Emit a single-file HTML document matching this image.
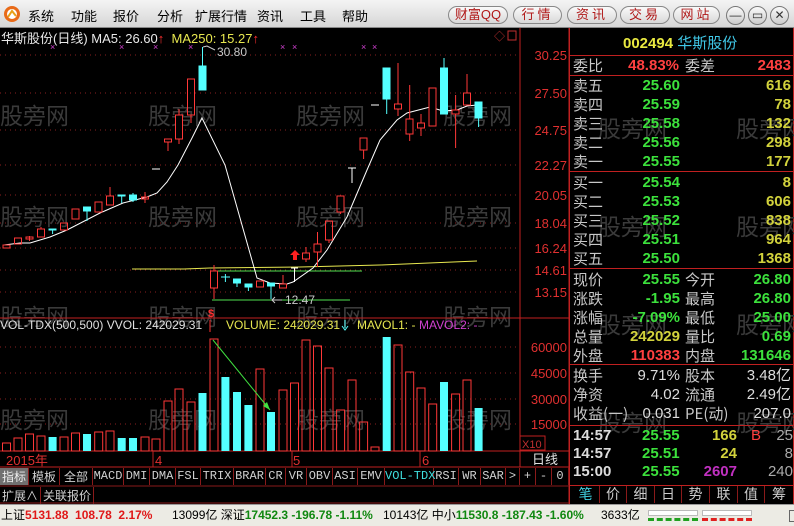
<!DOCTYPE html>
<html><head><meta charset="utf-8"><style>
*{margin:0;padding:0;box-sizing:border-box}
body{width:794px;height:526px;overflow:hidden;background:#000;font-family:"Liberation Sans","Noto Sans CJK SC",sans-serif;position:relative}
.a{position:absolute;white-space:nowrap}
#tb{left:0;top:0;width:794px;height:28px;background:linear-gradient(#f4f4f4,#d6d6d6);border-bottom:1px solid #888}
.m{top:6px;font-size:13px;color:#000}
.btn{top:6px;height:18px;border:1px solid #888;border-radius:9px;background:linear-gradient(#fafafa,#d8d8d8);color:#b01818;font-size:13px;text-align:center;line-height:16px;letter-spacing:3px}
.ci{top:6px;width:19px;height:19px;border:1px solid #777;border-radius:50%;background:linear-gradient(#fafafa,#ccc);font-size:12px;text-align:center;line-height:17px;color:#333}
.rp{font-size:15px;line-height:19px}
.l{color:#c8c8c8;font-family:"Noto Sans CJK SC",sans-serif}
.g{color:#3ce13c;font-weight:bold}
.y{color:#d2d23c;font-weight:bold}
.r{color:#ff4040;font-weight:bold}
.ib{top:468px;height:17px;border-right:1px solid #8a1a1a;color:#d0d0d0;font-size:12px;line-height:17px;text-align:center;font-family:"Liberation Mono","Noto Sans CJK SC",monospace}
.wm{color:#3a3a3a;font-size:23px;font-family:"Noto Sans CJK SC",sans-serif}
</style></head><body>
<div class="a" id="tb"></div>
<svg class="a" style="left:3px;top:5px" width="18" height="18"><circle cx="9" cy="9" r="8" fill="#e86a18"/><circle cx="9" cy="9" r="5" fill="#fff"/><path d="M5 12 L9 6 L13 11" stroke="#e8a018" stroke-width="2" fill="none"/></svg>
<div class="a m" style="left:28px">系统</div><div class="a m" style="left:71px">功能</div><div class="a m" style="left:113px">报价</div><div class="a m" style="left:157px">分析</div><div class="a m" style="left:195px">扩展行情</div><div class="a m" style="left:257px">资讯</div><div class="a m" style="left:300px">工具</div><div class="a m" style="left:342px">帮助</div>
<div class="a btn" style="left:448px;width:60px;letter-spacing:0">财富QQ</div><div class="a btn" style="left:513px;width:49px">行情</div><div class="a btn" style="left:567px;width:50px">资讯</div><div class="a btn" style="left:620px;width:50px">交易</div><div class="a btn" style="left:673px;width:47px">网站</div>
<div class="a ci" style="left:726px">—</div><div class="a ci" style="left:748px">▭</div><div class="a ci" style="left:770px">✕</div>

<svg class="a" style="left:0;top:28px" width="570" height="477" viewBox="0 28 570 477">
<g stroke="#8a2020" stroke-dasharray="1 4">
<line x1="0" y1="55" x2="520" y2="55"/><line x1="0" y1="93" x2="520" y2="93"/><line x1="0" y1="130" x2="520" y2="130"/><line x1="0" y1="165" x2="520" y2="165"/><line x1="0" y1="195" x2="520" y2="195"/><line x1="0" y1="223" x2="520" y2="223"/><line x1="0" y1="248" x2="520" y2="248"/><line x1="0" y1="270" x2="520" y2="270"/><line x1="0" y1="292" x2="520" y2="292"/>
<line x1="0" y1="347" x2="520" y2="347"/><line x1="0" y1="373" x2="520" y2="373"/><line x1="0" y1="399" x2="520" y2="399"/><line x1="0" y1="424" x2="520" y2="424"/>
</g>
<g class="wm" fill="#3a3a3a" font-size="23" font-family="Noto Sans CJK SC,sans-serif">
<text x="0" y="124">股旁网</text><text x="148" y="124">股旁网</text><text x="296" y="124">股旁网</text><text x="443" y="124">股旁网</text>
<text x="0" y="225">股旁网</text><text x="148" y="225">股旁网</text><text x="296" y="225">股旁网</text><text x="443" y="225">股旁网</text>
<text x="0" y="325">股旁网</text><text x="148" y="325">股旁网</text><text x="296" y="325">股旁网</text><text x="443" y="325">股旁网</text>
<text x="0" y="428">股旁网</text><text x="148" y="428">股旁网</text><text x="296" y="428">股旁网</text><text x="443" y="428">股旁网</text>
</g>
<g stroke="#c02020" fill="none"><line x1="520" y1="28" x2="520" y2="467"/><line x1="0" y1="318" x2="570" y2="318"/><line x1="0" y1="451" x2="570" y2="451"/><line x1="0" y1="467" x2="570" y2="467"/><line x1="569" y1="28" x2="569" y2="505"/>
<rect x="520" y="436" width="25" height="14"/></g>
<g fill="#e03030" font-size="13" font-family="Liberation Sans" text-anchor="end">
<text x="567" y="60">30.25</text><text x="567" y="98">27.50</text><text x="567" y="135">24.75</text><text x="567" y="170">22.27</text><text x="567" y="200">20.05</text><text x="567" y="228">18.04</text><text x="567" y="253">16.24</text><text x="567" y="275">14.61</text><text x="567" y="297">13.15</text>
<text x="567" y="352">60000</text><text x="567" y="378">45000</text><text x="567" y="404">30000</text><text x="567" y="429">15000</text>
</g>
<text x="522" y="448" fill="#c03030" font-size="11">X10</text>
<g fill="#d040d0" font-size="9"><text x="50" y="50">×</text><text x="119" y="50">×</text><text x="153" y="50">×</text><text x="188" y="50">×</text><text x="280" y="50">×</text><text x="292" y="50">×</text><text x="361" y="50">×</text><text x="372" y="50">×</text></g>
<text x="494" y="40" fill="#c03030" font-size="11">◇</text><rect x="508" y="31" width="8" height="9" fill="none" stroke="#c03030"/>
<polyline points="132,269 184,269 210,268 300,267 380,265 477,261" stroke="#e8e850" fill="none"/>
<line x1="213" y1="271" x2="362" y2="271" stroke="#50e050"/><line x1="212" y1="300" x2="350" y2="300" stroke="#50e050"/>
<polyline points="4,245 20,243 30,243 50,237 67,230 100,213 123,203 147,197 157,193 167,182 178,165 192,138 202,118 225,165 257,278 270,283 287,284 293,282 313,268 327,250 347,217 367,170 380,140 397,120 407,113 430,107 443,111 457,110 467,106 477,105" stroke="#fff" fill="none"/>
<g stroke="#ff3838" fill="none">
<rect x="3" y="245" width="7" height="3"/><rect x="14.5" y="238" width="7" height="6"/><line x1="29.5" y1="236" x2="29.5" y2="241"/><rect x="26" y="237" width="7" height="2"/>
<line x1="41" y1="227" x2="41" y2="229"/><rect x="37.5" y="229" width="7" height="8"/><rect x="60.5" y="223" width="7" height="7"/><rect x="72" y="209" width="7" height="10"/><rect x="95" y="202" width="7" height="10"/><line x1="110" y1="187" x2="110" y2="196"/><rect x="106.5" y="196" width="7" height="9"/>
<line x1="145" y1="192" x2="145" y2="203"/><rect x="141.5" y="197" width="7" height="2"/>
<line x1="168" y1="142" x2="168" y2="151"/><rect x="164.5" y="139" width="7" height="3"/><line x1="179" y1="109" x2="179" y2="144"/><rect x="175.5" y="115" width="7" height="24" fill="#000"/><line x1="191" y1="115" x2="191" y2="123"/><rect x="187.5" y="79" width="7" height="36"/>
<line x1="214" y1="265" x2="214" y2="299"/><rect x="210.5" y="271" width="7" height="17" fill="#000"/><rect x="256.5" y="281" width="7" height="6"/><line x1="283" y1="275" x2="283" y2="288"/><rect x="279.5" y="284" width="7" height="4" fill="#000"/>
<line x1="306" y1="247" x2="306" y2="262"/><rect x="302.5" y="253" width="7" height="6" fill="#000"/><line x1="317.5" y1="232" x2="317.5" y2="267"/><rect x="314" y="244" width="7" height="8" fill="#000"/><line x1="329" y1="240" x2="329" y2="243"/><rect x="325.5" y="221" width="7" height="19"/><line x1="340.6" y1="212" x2="340.6" y2="214"/><rect x="337" y="196" width="7" height="16"/>
<line x1="363.6" y1="150" x2="363.6" y2="159"/><rect x="360" y="138" width="7" height="12"/>
<line x1="398" y1="63" x2="398" y2="116"/><rect x="394.5" y="104" width="7" height="5" fill="#000"/><line x1="409.7" y1="85" x2="409.7" y2="141"/><rect x="406" y="119" width="7" height="15" fill="#000"/><line x1="421" y1="114" x2="421" y2="136"/><rect x="417.5" y="123" width="7" height="5" fill="#000"/><rect x="429" y="88" width="7" height="38" fill="#000"/>
<line x1="455.6" y1="95" x2="455.6" y2="148"/><rect x="452" y="110" width="7" height="4" fill="#000"/><line x1="467" y1="74" x2="467" y2="93"/><rect x="463.5" y="93" width="7" height="12"/>
</g>
<g stroke="#54ffff" fill="#54ffff">
<line x1="52.6" y1="229" x2="52.6" y2="234"/><rect x="49" y="229" width="7" height="1"/><line x1="87" y1="211" x2="87" y2="221"/><rect x="83.5" y="207" width="7" height="4"/><line x1="121.7" y1="195" x2="121.7" y2="203"/><rect x="118" y="195" width="7" height="1"/><line x1="133" y1="193" x2="133" y2="202"/><rect x="129.5" y="195" width="7" height="5"/>
<line x1="202.5" y1="47" x2="202.5" y2="66"/><rect x="199" y="66" width="7" height="24"/>
<line x1="225.4" y1="274" x2="225.4" y2="282"/><line x1="221" y1="277" x2="230" y2="277"/><line x1="237" y1="283" x2="237" y2="287"/><rect x="233.5" y="279" width="7" height="4"/><line x1="248.4" y1="287" x2="248.4" y2="291"/><rect x="245" y="284" width="7" height="3"/><line x1="271" y1="286" x2="271" y2="299"/><rect x="267.5" y="283" width="7" height="3"/>
<line x1="386.7" y1="99" x2="386.7" y2="114"/><rect x="383" y="68" width="7" height="31"/><line x1="444" y1="58" x2="444" y2="68"/><rect x="440.5" y="68" width="7" height="46"/><line x1="478.6" y1="118" x2="478.6" y2="127"/><rect x="475" y="102" width="7" height="16"/>
</g>
<g stroke="#fff"><line x1="152" y1="169" x2="160" y2="169"/><line x1="291" y1="268" x2="298" y2="268"/><line x1="294.5" y1="268" x2="294.5" y2="282"/><line x1="348" y1="168" x2="356" y2="168"/><line x1="352" y1="168" x2="352" y2="183"/><line x1="371" y1="105" x2="379" y2="105"/></g>
<path d="M203 47 L207 46 L215 50" stroke="#ccc" fill="none"/><text x="217" y="56" fill="#c8c8c8" font-size="12">30.80</text>
<path d="M272 300 L282 300 M275 297 L272 300 L275 303" stroke="#ccc" fill="none"/><text x="285" y="304" fill="#c8c8c8" font-size="12">12.47</text>
<path d="M295 250 L300 255 L297 255 L297 260 L293 260 L293 255 L290 255 Z" fill="#ff2020"/>
<text x="208" y="317" fill="#ff3030" font-size="11" font-weight="bold">$</text>
<g id="vol">
<g stroke="#ff3838" fill="none">
<rect x="2.5" y="443" width="8" height="8"/><rect x="14" y="438" width="8" height="13"/><rect x="25.5" y="434" width="8" height="17"/><rect x="37" y="436" width="8" height="15"/><rect x="60" y="437" width="8" height="14"/><rect x="71.5" y="433" width="8" height="18"/><rect x="94.7" y="432" width="8" height="19"/><rect x="106" y="431" width="8" height="20"/><rect x="141" y="437" width="8" height="14"/><rect x="152" y="439" width="8" height="12"/>
<rect x="164" y="401" width="8" height="50"/><rect x="175" y="389" width="8" height="62"/><rect x="187" y="402" width="8" height="49"/><rect x="210" y="339" width="8" height="112"/><rect x="256" y="369" width="8" height="82"/><rect x="279" y="390" width="8" height="61"/><rect x="290.5" y="383" width="8" height="68"/><rect x="302" y="340" width="8" height="111"/><rect x="313.5" y="346" width="8" height="105"/><rect x="325" y="368" width="8" height="83"/><rect x="336.6" y="410" width="8" height="41"/><rect x="348" y="380" width="8" height="71"/><rect x="359.6" y="422" width="8" height="29"/><rect x="371" y="447" width="8" height="4"/>
<rect x="394" y="345" width="8" height="106"/><rect x="405.7" y="372" width="8" height="79"/><rect x="417" y="388" width="8" height="63"/><rect x="428.7" y="404" width="8" height="47"/><rect x="451.6" y="394" width="8" height="57"/><rect x="463" y="380" width="8" height="71"/>
</g>
<g fill="#54ffff">
<rect x="48.6" y="437" width="8" height="14"/><rect x="83" y="434" width="8" height="17"/><rect x="117.7" y="438" width="8" height="13"/><rect x="129" y="438" width="8" height="13"/><rect x="198.5" y="393" width="8" height="58"/><rect x="221.4" y="377" width="8" height="74"/><rect x="233" y="392" width="8" height="59"/><rect x="244.4" y="405" width="8" height="46"/><rect x="267" y="412" width="8" height="39"/><rect x="382.7" y="337" width="8" height="114"/><rect x="440" y="382" width="8" height="69"/><rect x="474.6" y="408" width="8" height="43"/>
</g></g>
<line x1="213" y1="340" x2="270" y2="410" stroke="#40e040"/><path d="M270 410 L263 406 L267 402 Z" fill="#40e040"/>
<g font-size="12" font-family="Liberation Sans"><text x="0" y="329" fill="#e0e0e0">VOL-TDX(500,500)  VVOL: 242029.31</text><text x="226" y="329" fill="#e8e850">VOLUME: 242029.31</text><text x="357" y="329" fill="#e8e850">MAVOL1: -</text><text x="419" y="329" fill="#d040d0">MAVOL2: -</text></g>
<line x1="210" y1="320" x2="210" y2="332" stroke="#ff3030"/><path d="M345 320 L345 328 M342 326 L345 330 L348 326" stroke="#54ffff" fill="none"/>
<g fill="#e03030" font-size="13"><text x="6" y="465">2015年</text><text x="155" y="465">4</text><text x="293" y="465">5</text><text x="422" y="465">6</text></g>
<g stroke="#c02020"><line x1="153" y1="451" x2="153" y2="467"/><line x1="292" y1="451" x2="292" y2="467"/><line x1="420" y1="451" x2="420" y2="467"/></g>
<text x="532" y="464" fill="#e0e0e0" font-size="13" font-family="Noto Sans CJK SC">日线</text>
<line x1="0" y1="486" x2="570" y2="486" stroke="#8a1a1a"/><line x1="0" y1="503" x2="570" y2="503" stroke="#8a1a1a"/>
</svg>
<div class="a" style="left:1px;top:28px;font-size:13px;color:#e8e8e8">华斯股份(日线) MA5: 26.60<span style="color:#ff3030">↑</span> <span style="color:#e8e850">&nbsp;MA250: 15.27</span><span style="color:#ff3030">↑</span></div>

<div class="a ib" style="left:0;width:29px;background:#707070;color:#eee;font-family:'Noto Sans CJK SC'">指标</div>
<div class="a ib" style="left:29px;width:31px;font-family:'Noto Sans CJK SC'">模板</div>
<div class="a ib" style="left:60px;width:33px;font-family:'Noto Sans CJK SC'">全部</div>
<div class="a ib" style="left:93px;width:31px">MACD</div><div class="a ib" style="left:124px;width:26px">DMI</div><div class="a ib" style="left:150px;width:26px">DMA</div><div class="a ib" style="left:176px;width:25px">FSL</div><div class="a ib" style="left:201px;width:33px">TRIX</div><div class="a ib" style="left:234px;width:32px">BRAR</div><div class="a ib" style="left:266px;width:20px">CR</div><div class="a ib" style="left:286px;width:21px">VR</div><div class="a ib" style="left:307px;width:26px">OBV</div><div class="a ib" style="left:333px;width:25px">ASI</div><div class="a ib" style="left:358px;width:27px">EMV</div><div class="a ib" style="left:385px;width:49px;color:#40e0e0">VOL-TDX</div><div class="a ib" style="left:434px;width:25px">RSI</div><div class="a ib" style="left:459px;width:22px">WR</div><div class="a ib" style="left:481px;width:25px">SAR</div><div class="a ib" style="left:506px;width:14px">&gt;</div><div class="a ib" style="left:520px;width:16px">+</div><div class="a ib" style="left:536px;width:16px">-</div><div class="a ib" style="left:552px;width:17px">0</div>
<div class="a ib" style="top:487px;left:0;width:41px;font-family:'Noto Sans CJK SC'">扩展∧</div><div class="a ib" style="top:487px;left:41px;width:53px;font-family:'Noto Sans CJK SC'">关联报价</div>

<div class="a" style="left:569px;top:28px;width:225px;height:477px;border-left:1px solid #c02020;border-right:1px solid #c02020">
<div class="a wm" style="left:28px;top:82px">股旁网</div><div class="a wm" style="left:166px;top:82px">股旁网</div>
<div class="a wm" style="left:28px;top:180px">股旁网</div><div class="a wm" style="left:166px;top:180px">股旁网</div>
<div class="a wm" style="left:28px;top:278px">股旁网</div><div class="a wm" style="left:166px;top:278px">股旁网</div>
<div class="a wm" style="left:28px;top:376px">股旁网</div><div class="a wm" style="left:166px;top:376px">股旁网</div>
<div class="a" style="left:0;top:27px;width:224px;border-top:1px solid #c02020"></div>
<div class="a" style="left:0;top:47px;width:224px;border-top:1px solid #c02020"></div>
<div class="a" style="left:0;top:143px;width:224px;border-top:1px solid #c02020"></div>
<div class="a" style="left:0;top:240px;width:224px;border-top:1px solid #c02020"></div>
<div class="a" style="left:0;top:336px;width:224px;border-top:1px solid #c02020"></div>
<div class="a" style="left:0;top:397px;width:224px;border-top:1px solid #c02020"></div>
<div class="a" style="left:0;top:457px;width:224px;border-top:1px solid #c02020"></div>
</div>
<div class="a" style="left:623px;top:32px;font-size:15px"><b style="color:#e8e840">002494</b> <span style="color:#40c8e8;font-family:'Noto Sans CJK SC'">华斯股份</span></div>
<div class="a" style="left:570px;top:56px;width:224px">
<div class="rp" style="position:relative;height:20px"><span class="a l" style="left:3px">委比</span><span class="a r" style="right:115px">48.83%</span><span class="a l" style="left:115px">委差</span><span class="a r" style="right:3px">2483</span></div>
</div>
<div class="a rp" style="left:570px;top:76px;width:224px;height:380px">
<div class="a l" style="left:3px;top:0">卖五</div><div class="a g" style="right:114px;top:0">25.60</div><div class="a y" style="right:3px;top:0">616</div>
<div class="a l" style="left:3px;top:19px">卖四</div><div class="a g" style="right:114px;top:19px">25.59</div><div class="a y" style="right:3px;top:19px">78</div>
<div class="a l" style="left:3px;top:38px">卖三</div><div class="a g" style="right:114px;top:38px">25.58</div><div class="a y" style="right:3px;top:38px">132</div>
<div class="a l" style="left:3px;top:57px">卖二</div><div class="a g" style="right:114px;top:57px">25.56</div><div class="a y" style="right:3px;top:57px">298</div>
<div class="a l" style="left:3px;top:76px">卖一</div><div class="a g" style="right:114px;top:76px">25.55</div><div class="a y" style="right:3px;top:76px">177</div>
<div class="a l" style="left:3px;top:97px">买一</div><div class="a g" style="right:114px;top:97px">25.54</div><div class="a y" style="right:3px;top:97px">8</div>
<div class="a l" style="left:3px;top:116px">买二</div><div class="a g" style="right:114px;top:116px">25.53</div><div class="a y" style="right:3px;top:116px">606</div>
<div class="a l" style="left:3px;top:135px">买三</div><div class="a g" style="right:114px;top:135px">25.52</div><div class="a y" style="right:3px;top:135px">838</div>
<div class="a l" style="left:3px;top:154px">买四</div><div class="a g" style="right:114px;top:154px">25.51</div><div class="a y" style="right:3px;top:154px">964</div>
<div class="a l" style="left:3px;top:173px">买五</div><div class="a g" style="right:114px;top:173px">25.50</div><div class="a y" style="right:3px;top:173px">1368</div>
<div class="a l" style="left:3px;top:194px">现价</div><div class="a g" style="right:114px;top:194px">25.55</div><div class="a l" style="left:115px;top:194px">今开</div><div class="a g" style="right:3px;top:194px">26.80</div>
<div class="a l" style="left:3px;top:213px">涨跌</div><div class="a g" style="right:114px;top:213px">-1.95</div><div class="a l" style="left:115px;top:213px">最高</div><div class="a g" style="right:3px;top:213px">26.80</div>
<div class="a l" style="left:3px;top:232px">涨幅</div><div class="a g" style="right:114px;top:232px">-7.09%</div><div class="a l" style="left:115px;top:232px">最低</div><div class="a g" style="right:3px;top:232px">25.00</div>
<div class="a l" style="left:3px;top:251px">总量</div><div class="a y" style="right:114px;top:251px">242029</div><div class="a l" style="left:115px;top:251px">量比</div><div class="a g" style="right:3px;top:251px">0.69</div>
<div class="a l" style="left:3px;top:270px">外盘</div><div class="a r" style="right:114px;top:270px">110383</div><div class="a l" style="left:115px;top:270px">内盘</div><div class="a g" style="right:3px;top:270px">131646</div>
<div class="a l" style="left:3px;top:290px">换手</div><div class="a" style="right:114px;top:290px;color:#ddd">9.71%</div><div class="a l" style="left:115px;top:290px">股本</div><div class="a" style="right:3px;top:290px;color:#ddd">3.48亿</div>
<div class="a l" style="left:3px;top:309px">净资</div><div class="a" style="right:114px;top:309px;color:#ddd">4.02</div><div class="a l" style="left:115px;top:309px">流通</div><div class="a" style="right:3px;top:309px;color:#ddd">2.49亿</div>
<div class="a l" style="left:3px;top:328px">收益(一)</div><div class="a" style="right:114px;top:328px;color:#ddd">0.031</div><div class="a l" style="left:115px;top:328px">PE(动)</div><div class="a" style="right:3px;top:328px;color:#ddd">207.0</div>
<div class="a" style="left:3px;top:350px;color:#ddd;font-weight:bold">14:57</div><div class="a g" style="left:72px;top:350px">25.55</div><div class="a y" style="right:57px;top:350px">166</div><div class="a r" style="left:181px;top:350px;font-weight:normal">B</div><div class="a" style="right:1px;top:350px;color:#aaa">25</div>
<div class="a" style="left:3px;top:368px;color:#ddd;font-weight:bold">14:57</div><div class="a g" style="left:72px;top:368px">25.51</div><div class="a y" style="right:57px;top:368px">24</div><div class="a" style="right:1px;top:368px;color:#aaa">8</div>
<div class="a" style="left:3px;top:386px;color:#ddd;font-weight:bold">15:00</div><div class="a g" style="left:72px;top:386px">25.55</div><div class="a" style="right:57px;top:386px;color:#c030c0;font-weight:bold">2607</div><div class="a" style="right:1px;top:386px;color:#aaa">240</div>
</div>
<div class="a" style="left:570px;top:486px;width:224px;height:18px;font-size:14px;font-family:'Noto Sans CJK SC';color:#ccc;line-height:17px">
<span class="a" style="left:2px;width:27px;text-align:center;color:#40d0e0">笔</span><span class="a" style="left:29px;width:27px;text-align:center;border-left:1px solid #8a1a1a">价</span><span class="a" style="left:56px;width:28px;text-align:center;border-left:1px solid #8a1a1a">细</span><span class="a" style="left:84px;width:27px;text-align:center;border-left:1px solid #8a1a1a">日</span><span class="a" style="left:111px;width:28px;text-align:center;border-left:1px solid #8a1a1a">势</span><span class="a" style="left:139px;width:28px;text-align:center;border-left:1px solid #8a1a1a">联</span><span class="a" style="left:167px;width:27px;text-align:center;border-left:1px solid #8a1a1a">值</span><span class="a" style="left:194px;width:29px;text-align:center;border-left:1px solid #8a1a1a">筹</span>
</div>
<div class="a" style="left:0;top:504px;width:794px;height:22px;background:#ecebe4;border-top:1px solid #999;font-size:12px;line-height:21px;color:#000">
<span class="a" style="left:1px">上证<b style="color:#e01818">5131.88&nbsp; 108.78&nbsp; 2.17%</b></span>
<span class="a" style="left:172px">13099亿 深证<b style="color:#108810">17452.3 -196.78 -1.11%</b></span>
<span class="a" style="left:383px">10143亿 中小<b style="color:#108810">11530.8 -187.43 -1.60%</b></span>
<span class="a" style="left:601px">3633亿</span>
<div class="a" style="left:648px;top:5px;width:50px;height:6px;border:1px solid #bbb;background:#fff"></div><div class="a" style="left:648px;top:13px;width:50px;height:3px;border-top:3px dashed #20a020"></div>
<div class="a" style="left:702px;top:5px;width:50px;height:6px;border:1px solid #bbb;background:#fff"></div><div class="a" style="left:702px;top:13px;width:50px;height:3px;border-top:3px dashed #e02020"></div>
<div class="a" style="left:789px;top:5px;width:6px;height:12px;border:1px solid #666"></div>
</div>
</body></html>
